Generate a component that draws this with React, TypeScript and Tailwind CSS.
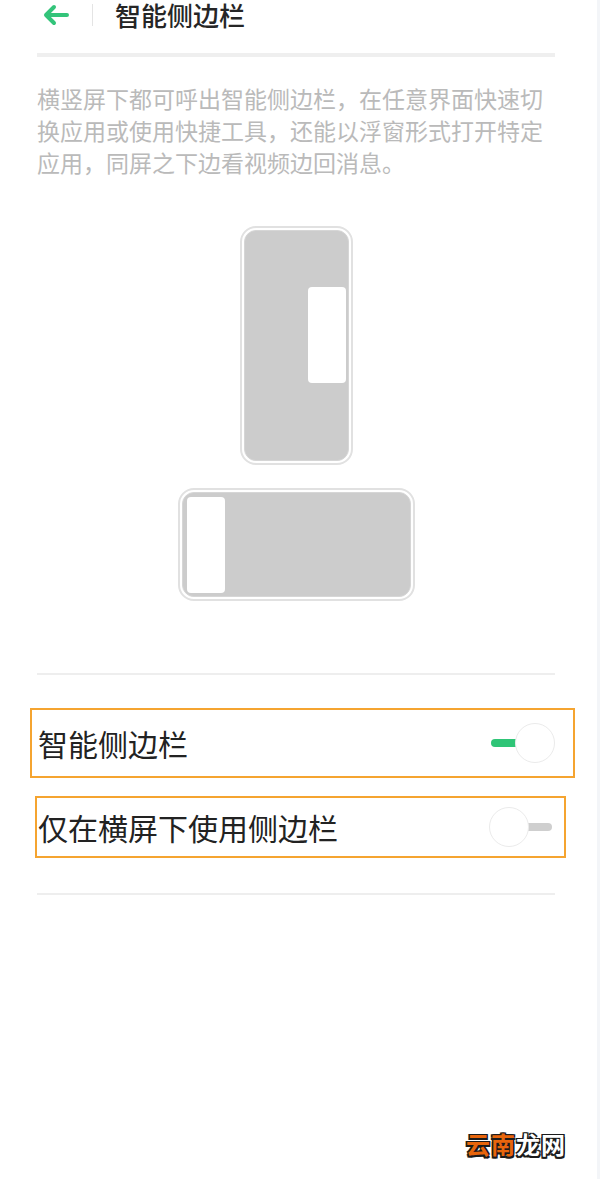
import React, { useState } from "react";

const Toggle = ({ on, onClick }: { on: boolean; onClick: () => void }) => {
  return (
    <button onClick={onClick} className="relative flex h-[40px] w-[65px] items-center">
      {on ? (
        <>
          <div className="ml-[1px] h-[8px] w-[34px] rounded-l-full bg-[#2fc577]" />
          <div className="absolute right-0 top-0 h-[40px] w-[40px] rounded-full border-[1.5px] border-[#ebebeb] bg-white" />
        </>
      ) : (
        <>
          <div className="ml-auto mr-[2px] h-[8px] w-[34px] rounded-r-full bg-[#cfcfcf]" />
          <div className="absolute left-0 top-0 h-[40px] w-[40px] rounded-full border-[1.5px] border-[#ebebeb] bg-white" />
        </>
      )}
    </button>
  );
};

export default function App() {
  const [sidebar, setSidebar] = useState(true);
  const [landscapeOnly, setLandscapeOnly] = useState(false);

  return (
    <div className="relative h-[1179px] w-[600px] overflow-hidden bg-white font-['Noto_Sans_CJK_SC',sans-serif]">
      {/* header */}
      <div className="flex h-[30px] items-center">
        <svg className="ml-[42px]" width="28" height="22" viewBox="0 0 28 22" fill="none">
          <path
            d="M25 11H4M12 3L4 11L12 19"
            stroke="#33c47a"
            strokeWidth="4"
            strokeLinecap="round"
            strokeLinejoin="round"
          />
        </svg>
        <div className="ml-[22px] h-[22px] w-px bg-[#e4e4e4]" />
        <h1 className="ml-[22px] text-[26px] font-medium leading-[30px] text-[#262626]">智能侧边栏</h1>
      </div>
      <div className="ml-[37px] mt-[23px] h-[4px] w-[518px] bg-[#efefef]" />

      {/* description */}
      <p className="ml-[37px] mt-[25px] w-[518px] text-[23px] leading-[32px] text-[#bababa]">
        横竖屏下都可呼出智能侧边栏，在任意界面快速切换应用或使用快捷工具，还能以浮窗形式打开特定应用，同屏之下边看视频边回消息。
      </p>

      {/* illustration */}
      <div className="ml-[37px] mt-[48px] flex w-[518px] flex-col items-center">
        <div className="h-[239px] w-[113px] rounded-[16px] border-2 border-[#e1e1e1] bg-white p-[2px]">
          <div className="flex h-full justify-end rounded-[12px] border border-[#d6d6d6] bg-[#cccccc] pr-[2px] pt-[56px]">
            <div className="h-[96px] w-[38px] rounded-[4px] bg-white" />
          </div>
        </div>
        <div className="mt-[23px] h-[113px] w-[237px] rounded-[16px] border-2 border-[#e1e1e1] bg-white p-[2px]">
          <div className="flex h-full items-center rounded-[12px] border border-[#d6d6d6] bg-[#cccccc] pl-[4px]">
            <div className="h-[96px] w-[38px] rounded-[4px] bg-white" />
          </div>
        </div>
      </div>

      <div className="ml-[37px] mt-[72px] h-[2px] w-[518px] bg-[#eeeeee]" />

      {/* settings rows */}
      <div className="ml-[30px] mt-[33px] flex h-[70px] w-[545px] items-center justify-between border-2 border-[#f5a430] pl-[6px] pr-[18px]">
        <span className="text-[30px] leading-[36px] text-[#222222]">智能侧边栏</span>
        <Toggle on={sidebar} onClick={() => setSidebar(!sidebar)} />
      </div>
      <div className="ml-[35px] mt-[18px] flex h-[62px] w-[531px] items-center justify-between border-2 border-[#f5a430] pl-[1px] pr-[10px]">
        <span className="text-[30px] leading-[36px] text-[#222222]">仅在横屏下使用侧边栏</span>
        <Toggle on={landscapeOnly} onClick={() => setLandscapeOnly(!landscapeOnly)} />
      </div>

      <div className="ml-[37px] mt-[35px] h-[2px] w-[518px] bg-[#eeeeee]" />

      {/* watermark */}
      <div className="absolute left-[466px] top-[1126px] text-[24px] font-bold leading-[36px] tracking-[1px] [text-shadow:-1.5px_-1.5px_0_#1b1b1b,1.5px_-1.5px_0_#1b1b1b,-1.5px_1.5px_0_#1b1b1b,1.5px_1.5px_0_#1b1b1b,0_1.5px_0_#1b1b1b,0_-1.5px_0_#1b1b1b]">
        <span className="text-[#e8650c]">云南</span>
        <span className="text-white">龙网</span>
      </div>
      <div className="absolute right-0 top-0 h-full w-[3px] bg-[#f3f5f8]" />
    </div>
  );
}
